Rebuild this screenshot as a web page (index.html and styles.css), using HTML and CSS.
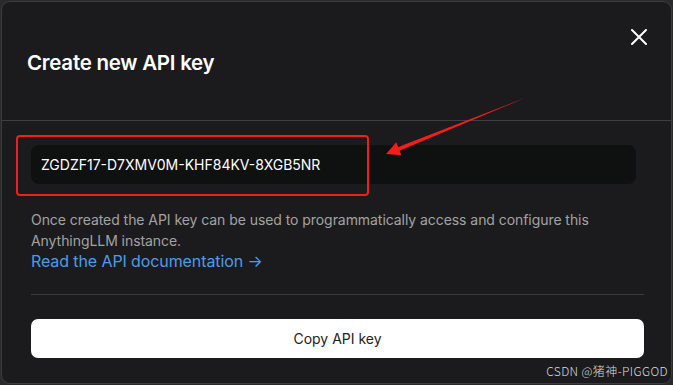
FILE: index.html
```html
<!DOCTYPE html>
<html lang="en">
<head>
    <meta charset="UTF-8">
    <meta name="viewport" content="width=device-width, initial-scale=1.0">
    <title>Create new API key</title>
    <link rel="stylesheet" href="styles.css">
</head>
<body>
    <div class="modal">
        <div class="modal-header">
            <h2 class="modal-title">Create new API key</h2>
            <button class="close-btn" aria-label="Close">
                <svg width="16" height="16" viewBox="0 0 16 16">
                    <path d="M1 1 L15 15 M15 1 L1 15" stroke="#fff" stroke-width="2" stroke-linecap="round"/>
                </svg>
            </button>
        </div>

        <div class="modal-body">
            <input class="key-input" type="text" value="ZGDZF17-D7XMV0M-KHF84KV-8XGB5NR" readonly>

            <p class="note">Once created the API key can be used to programmatically access and configure this AnythingLLM instance.</p>
            <a class="doc-link" href="#">Read the API documentation &rarr;</a>

            <div class="divider"></div>

            <button class="copy-btn">Copy API key</button>
        </div>

        <span class="watermark">CSDN @猪神-PIGGOD</span>
    </div>

    <!-- red markup drawn over the screenshot -->
    <svg class="markup" width="673" height="385" viewBox="0 0 673 385">
        <rect x="17" y="136" width="351" height="59" rx="3" fill="none" stroke="#f21d1d" stroke-width="2"/>
        <polygon points="386,154 396.3,142.3 398.2,147 525,98 399.6,150.7 401.5,155.3" fill="#f21d1d"/>
    </svg>
</body>
</html>
```

FILE: styles.css
```css
body {
    margin: 0;
    padding: 1px;
    background-color: #2a2a2c;
    font-family: Inter, "Noto Sans", sans-serif;
    color: #fff;
}
.modal {
    position: relative;
    box-sizing: border-box;
    width: 671px;
    height: 383px;
    background-color: #1b1b1d;
    border: 1px solid #3d3d40;
    border-radius: 9px;
}
.modal-header {
    display: flex;
    justify-content: space-between;
    align-items: flex-start;
    height: 118px;
    padding: 0 24px 0 25px;
    border-bottom: 1px solid #3f3f42;
}
.modal-title {
    margin: 47px 0 0;
    font-size: 20.5px;
    line-height: 28px;
    font-weight: 600;
    letter-spacing: -0.25px;
}
.close-btn {
    margin-top: 27px;
    padding: 0;
    width: 16px;
    height: 16px;
    border: none;
    background: none;
    cursor: pointer;
}
.close-btn svg {
    display: block;
}
.modal-body {
    padding: 24px 27px 0 29px;
}
.key-input {
    display: block;
    box-sizing: border-box;
    width: calc(100% - 8px);
    height: 39px;
    padding: 0 10px;
    border: none;
    border-radius: 8px;
    background-color: #0f1010;
    color: #fff;
    font-family: inherit;
    font-size: 14px;
    outline: none;
}
.note {
    margin: 25px 0 0;
    font-size: 14px;
    line-height: 21px;
    letter-spacing: -0.06px;
    color: #a3a3a3;
}
.doc-link {
    display: inline-block;
    font-size: 16px;
    line-height: 20px;
    letter-spacing: -0.1px;
    color: #4a9ded;
    text-decoration: none;
}
.divider {
    margin-top: 23px;
    height: 1px;
    background-color: #3b3b3e;
}
.copy-btn {
    display: block;
    width: 100%;
    height: 39px;
    margin-top: 24px;
    border: none;
    border-radius: 7px;
    background-color: #fff;
    color: #222;
    font-family: inherit;
    font-size: 14px;
    cursor: pointer;
}
.watermark {
    position: absolute;
    right: 3px;
    bottom: 4px;
    font-family: "Noto Sans CJK SC", sans-serif;
    font-size: 12px;
    font-weight: 300;
    letter-spacing: 0.4px;
    color: #dcdcdc;
}
.markup {
    position: absolute;
    top: 0;
    left: 0;
    pointer-events: none;
}
```
